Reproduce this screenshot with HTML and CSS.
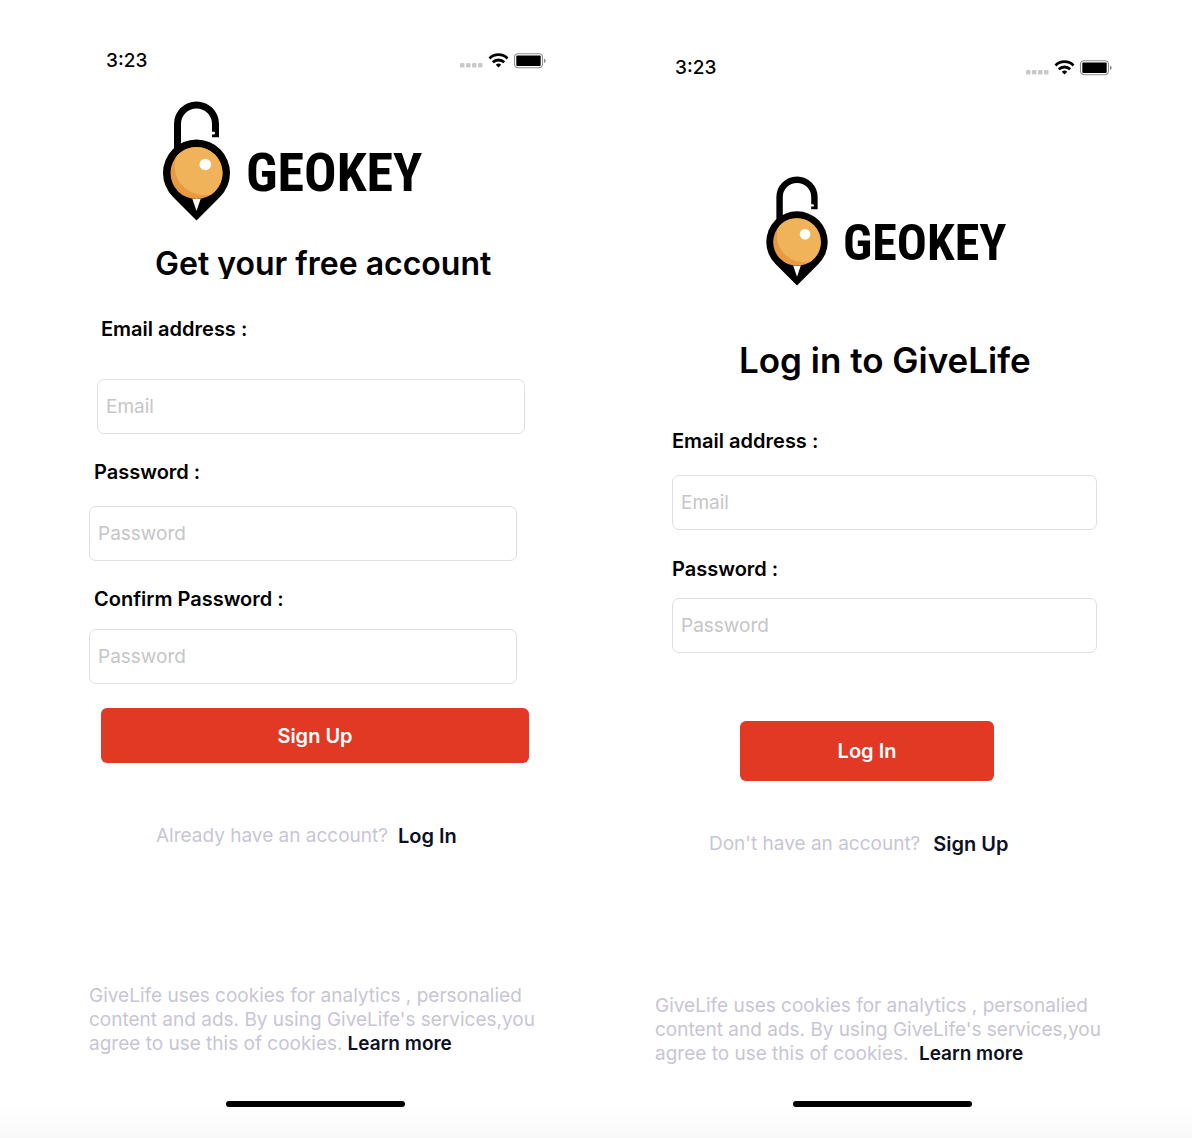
FILE: index.html
```html
<!DOCTYPE html>
<html lang="en">
<head>
<meta charset="utf-8">
<meta name="viewport" content="width=device-width, initial-scale=1">
<title>GeoKey – account screens</title>
<link rel="stylesheet" href="styles.css">
</head>
<body>
<svg width="0" height="0" class="defs" aria-hidden="true">
  <symbol id="pin" viewBox="0 0 67 120">
    <path d="M14.500 60V23a19 19 0 0 1 38 0v13.200" fill="none" stroke="#000" stroke-width="7"/>
    <path d="M48.500 30.800h2.300a1.300 1.300 0 0 1 0 2.600h-2.300z" fill="#fff"/>
    <path d="M33.500 119.400 9.800 95.700a33.500 33.500 0 1 1 47.400 0z"/>
    <circle cx="33.500" cy="72" r="26" fill="#e9993f"/>
    <path d="M33.500 46a26 26 0 0 1 26 26c0 9-4.600 17-11.600 21.700-17.600 3.600-36.200-9.700-36.200-27.700 0-5 .7-8 1.800-10.600C18 49.600 25.200 46 33.500 46z" fill="#f0b35a"/>
    <circle cx="42.300" cy="63.500" r="5.800" fill="#fff"/>
    <path d="M29.300 97.700q4.200.8 8.400 0L33.500 110z" fill="#fff"/>
  </symbol>
  <symbol id="status" viewBox="0 0 86 16">
    <g fill="#c9c9c9"><rect x="0" y="10" width="4.500" height="4.500" rx="1.200"/><rect x="6" y="10" width="4.500" height="4.500" rx="1.200"/><rect x="12" y="10" width="4.500" height="4.500" rx="1.200"/><rect x="18" y="10" width="4.500" height="4.500" rx="1.200"/></g>
    <g fill="none" stroke="#000" stroke-width="2.800"><path d="M29.500 5.400a12.800 12.800 0 0 1 18 0"/><path d="M32.800 9.300a8.200 8.200 0 0 1 11.400 0"/></g>
    <path d="M38.500 14.500l-2.700-2.700a4 4 0 0 1 5.400 0z"/>
    <rect x="54.500" y=".7" width="28" height="14" rx="3.600" fill="none" stroke="#8e8e8e" stroke-width="1.100"/>
    <rect x="56.300" y="2.500" width="24.400" height="10.400" rx="1"/>
    <path d="M84 5.500c2.300.8 2.300 3.800 0 4.600z" fill="#8e8e8e"/>
  </symbol>
</svg>
<main class="screens">
  <section class="screen signup" id="signup">
    <header class="statusbar">
      <span>3:23</span>
      <svg class="status-icons" role="img" aria-label="Wi-Fi connected, battery full"><use href="#status"/></svg>
    </header>
    <div class="logo">
      <svg class="pin" aria-hidden="true"><use href="#pin"/></svg>
      <span class="wordmark">GEOKEY</span>
    </div>
    <h1 class="title">Get your free account</h1>
    <form class="form">
      <div class="field field-email">
        <label for="su-email">Email address :</label>
        <input id="su-email" type="email" placeholder="Email">
      </div>
      <div class="field field-password">
        <label for="su-pass">Password :</label>
        <input id="su-pass" type="password" placeholder="Password">
      </div>
      <div class="field field-confirm">
        <label for="su-confirm">Confirm Password :</label>
        <input id="su-confirm" type="password" placeholder="Password">
      </div>
      <button class="submit" type="submit">Sign Up</button>
    </form>
    <p class="switch"><span>Already have an account?</span><a href="#login">Log In</a></p>
    <p class="cookies">GiveLife uses cookies for analytics , personalied<br>content and ads. By using GiveLife's services,you<br>agree to use this of cookies.<a href="#cookies">Learn more</a></p>
    <div class="home-bar"></div>
  </section>
  <section class="screen login" id="login">
    <header class="statusbar">
      <span>3:23</span>
      <svg class="status-icons" role="img" aria-label="Wi-Fi connected, battery full"><use href="#status"/></svg>
    </header>
    <div class="logo">
      <svg class="pin" aria-hidden="true"><use href="#pin"/></svg>
      <span class="wordmark">GEOKEY</span>
    </div>
    <h1 class="title">Log in to GiveLife</h1>
    <form class="form">
      <div class="field field-email">
        <label for="li-email">Email address :</label>
        <input id="li-email" type="email" placeholder="Email">
      </div>
      <div class="field field-password">
        <label for="li-pass">Password :</label>
        <input id="li-pass" type="password" placeholder="Password">
      </div>
      <button class="submit" type="submit">Log In</button>
    </form>
    <p class="switch"><span>Don't have an account?</span><a href="#signup">Sign Up</a></p>
    <p class="cookies">GiveLife uses cookies for analytics , personalied<br>content and ads. By using GiveLife's services,you<br>agree to use this of cookies. <a href="#cookies">Learn more</a></p>
    <div class="home-bar"></div>
  </section>
</main>
</body>
</html>
```
FILE: styles.css
```css
* { box-sizing: border-box; }

body {
  margin: 0;
  min-height: 100vh;
  background: #fff linear-gradient(#fff, #f8f8f8) bottom / 100% 32px no-repeat;
  color: #000;
  font-family: Inter, "Liberation Sans", sans-serif;
  font-size: 19px;
  line-height: 24px;
}

.defs { position: absolute; }

.screens {
  display: grid;
  grid-template-columns: repeat(auto-fit, minmax(520px, 1fr));
  padding: 0 26px 24px 32px;
}

.screen { display: flex; flex-direction: column; }
.signup { padding: 49px 57px 0; }
.login { padding: 56px 56px 0; }

.statusbar {
  display: flex;
  align-items: center;
  justify-content: space-between;
  margin-right: -4px;
  padding-left: 17px;
  font-weight: 500;
}
.login .statusbar { margin-right: -2px; padding-left: 20px; }
.status-icons { width: 86px; height: 16px; }

.logo { display: flex; align-items: center; }
.signup .logo { margin-top: 28px; padding-left: 74px; gap: 16px; }
.login .logo { margin-top: 96px; padding-left: 111px; gap: 15px; }
.signup .pin { width: 67px; height: 120px; }
.login .pin { width: 62px; height: 110px; }
.wordmark {
  padding-top: 24px;
  font-family: "Roboto Condensed", "Open Sans Condensed", "Liberation Sans Narrow", "DejaVu Sans Condensed", sans-serif;
  font-size: 54px;
  font-weight: 700;
  line-height: 56px;
}
.login .wordmark { font-size: 50px; }

.title { margin: 0; font-weight: 600; white-space: nowrap; }
.signup .title {
  height: 35px;
  margin-top: 23px;
  padding-left: 66px;
  overflow: hidden;
  font-size: 32px;
  line-height: 40px;
}
.login .title {
  margin-top: 52px;
  padding-left: 84px;
  font-size: 35px;
  line-height: 44px;
}

.form { display: flex; flex-direction: column; }
.signup .form { margin-top: 38px; padding-right: 13px; }
.login .form { margin-top: 47px; padding: 0 13px 0 17px; }

.field { display: flex; flex-direction: column; }
.field label { font-size: 20px; font-weight: 600; }
.field input {
  width: 100%;
  height: 55px;
  padding: 0 8px;
  border: 1px solid #dfdfdf;
  border-radius: 7px;
  background: #fff;
  font: inherit;
}
.field input::placeholder { color: #c6c6c6; opacity: 1; }

.signup .field { padding-right: 12px; }
.signup .field + .field { margin-top: 26px; }
.signup .field label { padding-left: 5px; }
.signup .field-email { gap: 38px; padding: 0 4px 0 8px; }
.signup .field-email label { padding-left: 4px; }
.signup .field-password { gap: 22px; }
.signup .field-confirm { gap: 18px; }

.login .field + .field { margin-top: 27px; }
.login .field-email { gap: 22px; }
.login .field-password { gap: 17px; }

.submit {
  height: 55px;
  border: 0;
  border-radius: 6px;
  background: #e13924;
  color: #fff;
  font: inherit;
  font-size: 20px;
  font-weight: 600;
}
.signup .submit { margin: 24px 0 0 12px; }
.login .submit { height: 60px; margin: 68px 103px 0 68px; }

.switch { display: flex; margin: 0; color: #c8c6d4; }
.signup .switch { gap: 10px; margin-top: 61px; padding-left: 67px; }
.login .switch { gap: 13px; margin-top: 51px; padding-left: 54px; }

.cookies { margin: 0; color: #c8c6d4; white-space: nowrap; }
.signup .cookies { margin-top: 136px; }
.login .cookies { margin-top: 138px; }
.cookies a { margin-left: 5px; }

.switch a, .cookies a { color: #0d1024; font-weight: 600; text-decoration: none; }
.switch a { font-size: 20px; }

.home-bar {
  align-self: center;
  width: 179px;
  height: 6px;
  border-radius: 3px;
  background: #000;
}
.signup .home-bar { margin-top: 45px; }
.login .home-bar { margin-top: 35px; }
```
